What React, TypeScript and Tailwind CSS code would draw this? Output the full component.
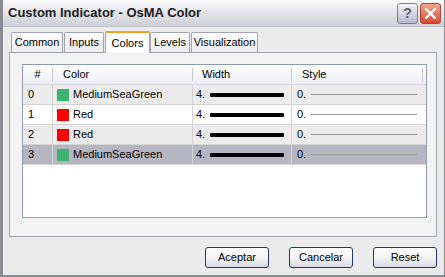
import React from 'react';

type Row = { id: number; color: string; name: string };

const rows: Row[] = [
  { id: 0, color: '#3cb371', name: 'MediumSeaGreen' },
  { id: 1, color: '#ff0000', name: 'Red' },
  { id: 2, color: '#ff0000', name: 'Red' },
  { id: 3, color: '#3cb371', name: 'MediumSeaGreen' },
];

const tabs = [
  { label: 'Common', w: 'w-[52px]' },
  { label: 'Inputs', w: 'w-[40px]' },
  { label: 'Colors', w: 'w-[45px]' },
  { label: 'Levels', w: 'w-[40px]' },
  { label: 'Visualization', w: 'w-[67px]' },
];

function TitleButton({ kind }: { kind: 'help' | 'close' }) {
  if (kind === 'help') {
    return (
      <div className="w-[21px] h-[21px] rounded-[3px] border border-[#7b7f94] bg-gradient-to-b from-[#f4f5fa] to-[#b6b9cc] flex items-center justify-center text-[14px] font-bold text-[#5a5f78] leading-none">
        ?
      </div>
    );
  }
  return (
    <div className="w-[21px] h-[21px] rounded-[3px] border border-[#a34a3c] bg-gradient-to-b from-[#f1a68f] to-[#d8462b] flex items-center justify-center">
      <svg width="13" height="13" viewBox="0 0 13 13">
        <path d="M2 2 L11 11 M11 2 L2 11" stroke="#fff" strokeWidth="2.4" strokeLinecap="round" />
      </svg>
    </div>
  );
}

function DialogButton({ label }: { label: string }) {
  return (
    <button className="w-[64px] h-[21px] rounded-[3px] border border-[#1d3a6a] bg-gradient-to-b from-white via-[#f4f4f4] to-[#d9dbe3] text-[11px] text-black leading-none">
      {label}
    </button>
  );
}

export default function App() {
  return (
    <div
      className="w-[445px] h-[277px] bg-[#ebebeb] border-l-[3px] border-r border-b-[2px] border-[#8a8a92] flex flex-col overflow-hidden"
      style={{ fontFamily: '"Liberation Sans", Arial, sans-serif' }}
    >
      {/* title bar */}
      <div className="h-[27px] shrink-0 bg-gradient-to-b from-[#fbfbfc] via-[#e4e4ea] to-[#cfd0d8] border-b border-[#bfc0c8] flex items-center pl-[5px] pr-[3px]">
        <span className="text-[13px] font-bold text-[#1a1a24]">Custom Indicator - OsMA Color</span>
        <div className="ml-auto flex gap-[2px]">
          <TitleButton kind="help" />
          <TitleButton kind="close" />
        </div>
      </div>

      {/* body */}
      <div className="flex-1 flex flex-col pl-[6px] pr-[6px] pt-[3px]">
        {/* tabs */}
        <div className="flex items-end h-[22px] pl-[2px]">
          {tabs.map(t =>
            t.label === 'Colors' ? (
              <div
                key={t.label}
                className={`${t.w} relative h-[22px] bg-white border border-b-0 border-[#a0a4b0] border-t-[#f0a020] border-t-2 rounded-t-[2px] text-[11px] flex justify-center items-start pt-[2px] -mb-[1px] z-10`}
              >
                {t.label}
              </div>
            ) : (
              <div
                key={t.label}
                className={`${t.w} h-[20px] bg-gradient-to-b from-white to-[#ececec] border border-b-0 border-[#a0a4b0] rounded-t-[2px] text-[11px] flex justify-center items-center mr-[1px]`}
              >
                {t.label}
              </div>
            )
          )}
        </div>

        {/* panel */}
        <div className="h-[185px] w-[428px] border border-[#a0a4b0] bg-[#f3f3f3] pt-[11px] pl-[12px]">
          <div className="w-[405px] h-[154px] border border-[#8f9bb3] bg-white">
            {/* header */}
            <div className="h-[20px] flex text-[11px] bg-gradient-to-b from-white to-[#eceef4] border-b border-[#d6d6de]">
              <div className="w-[30px] flex items-center justify-center border-r border-[#c8c8d0] my-[3px]">#</div>
              <div className="w-[140px] flex items-center pl-[10px] border-r border-[#c8c8d0] my-[3px]">Color</div>
              <div className="w-[99px] flex items-center pl-[9px] border-r border-[#c8c8d0] my-[3px]">Width</div>
              <div className="w-[131px] flex items-center pl-[10px] border-r border-[#c8c8d0] my-[3px]">Style</div>
            </div>
            {rows.map(r => {
              const bg =
                r.id === 3 ? 'bg-[#b6b6c2]' : r.id % 2 === 0 ? 'bg-[#ececec]' : 'bg-white';
              return (
                <div key={r.id} className={`h-[20px] flex text-[11px] border-b border-[#d4d4d4] ${bg}`}>
                  <div className="w-[30px] flex items-center pl-[5px] border-r border-[#d4d4d4]">{r.id}</div>
                  <div className="w-[140px] flex items-center pl-[4px] gap-[4px] border-r border-[#d4d4d4]">
                    <span className="w-[12px] h-[12px] inline-block" style={{ backgroundColor: r.color }} />
                    {r.name}
                  </div>
                  <div className="w-[99px] flex items-center pl-[3px] gap-[5px] border-r border-[#d4d4d4]">
                    <span>4.</span>
                    <span className="w-[74px] h-[4px] bg-black rounded-[1px]" />
                  </div>
                  <div className="w-[125px] flex items-center pl-[5px] gap-[5px]">
                    <span>0.</span>
                    <span className="w-[106px] h-px bg-[#9a9a9a]" />
                  </div>
                </div>
              );
            })}
          </div>
        </div>

        {/* buttons */}
        <div className="flex justify-end gap-[20px] pr-[1px] mt-[10px]">
          <DialogButton label="Aceptar" />
          <DialogButton label="Cancelar" />
          <DialogButton label="Reset" />
        </div>
      </div>
    </div>
  );
}
